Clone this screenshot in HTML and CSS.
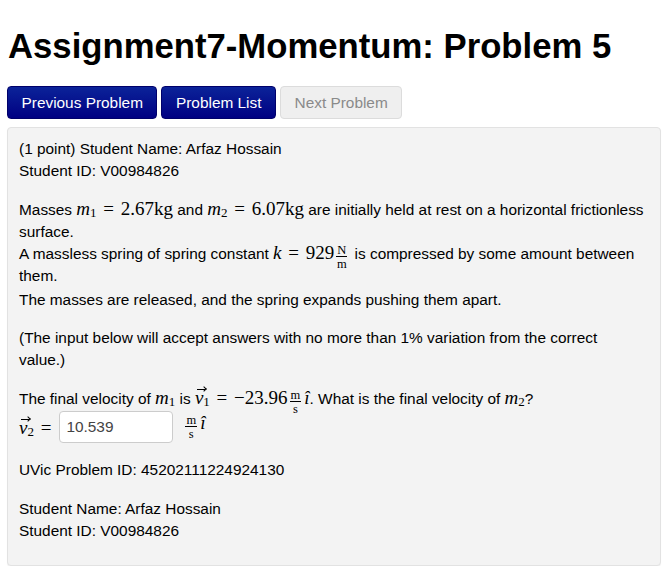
FILE: index.html
```html
<!DOCTYPE html>
<html>
<head>
<meta charset="utf-8">
<link rel="stylesheet" href="styles.css">
</head>
<body>
<div class="page">
  <h1 class="title">Assignment7-Momentum: Problem 5</h1>
  <div class="nav">
    <span class="btn btn-primary">Previous Problem</span>
    <span class="btn btn-primary">Problem List</span>
    <span class="btn btn-disabled">Next Problem</span>
  </div>
  <div class="panel">
    <p>(1 point) Student Name: Arfaz Hossain<br>Student ID: V00984826</p>
    <p class="tight">Masses <span class="m"><i>m</i><sub>1</sub> <span class="op">=</span> 2.67kg</span> and <span class="m"><i>m</i><sub>2</sub> <span class="op">=</span> 6.07kg</span> are initially held at rest on a horizontal frictionless surface.<br>
    A massless spring of spring constant <span class="m"><i>k</i> <span class="op">=</span> 929<span class="frac"><span class="num">N</span><span class="den">m</span></span></span> is compressed by some amount between them.<br>
    <span class="gapline">The masses are released, and the spring expands pushing them apart.</span></p>
    <p>(The input below will accept answers with no more than 1% variation from the correct value.)</p>
    <p class="tight">The final velocity of <span class="m"><i>m</i><sub>1</sub></span> is <span class="m"><span class="vec"><i>v</i></span><sub>1</sub> <span class="op">=</span> &minus;23.96<span class="frac"><span class="num">m</span><span class="den">s</span></span><i>î</i></span>. What is the final velocity of <span class="m"><i>m</i><sub>2</sub></span>?<br>
    <span class="answer"><span class="m"><span class="vec"><i>v</i></span><sub>2</sub> <span class="op">=</span></span><span class="input">10.539</span><span class="m"><span class="frac"><span class="num">m</span><span class="den">s</span></span><i>î</i></span></span></p>
    <p>UVic Problem ID: 45202111224924130</p>
    <p>Student Name: Arfaz Hossain<br>Student ID: V00984826</p>
  </div>
</div>
</body>
</html>
```

FILE: styles.css
```css
html, body {
  margin: 0;
  padding: 0;
  background: #ffffff;
}
body {
  font-family: "Liberation Sans", Arial, Helvetica, sans-serif;
  color: #000;
}
.page {
  padding: 0 7px 0 7px;
}
.title {
  font-size: 34.7px;
  font-weight: bold;
  line-height: 40px;
  margin: 26px 0 20px 1px;
  letter-spacing: 0;
}
.nav {
  display: flex;
  gap: 4px;
  margin-bottom: 8px;
}
.btn {
  display: inline-block;
  font-size: 15.4px;
  line-height: 20px;
  padding: 6px 13.5px 5px 13.5px;
  border-radius: 4px;
  border: 1px solid transparent;
}
.btn-primary {
  color: #fff;
  background: linear-gradient(#0b2399, #000082);
  border-color: #00006a;
}
.btn-disabled {
  color: #8a8a8a;
  background: #efefef;
  border-color: #dcdcdc;
}
.panel {
  width: 627px;
  background: #f3f3f3;
  border: 1px solid #e2e2e2;
  border-radius: 4px;
  box-shadow: 0 1px 1px rgba(0,0,0,0.06);
  padding: 10px 14px 23px 11px;
  font-size: 15.4px;
  line-height: 22px;
}
.panel p {
  margin: 0 0 17px 0;
}
.panel p.tight {
  margin-bottom: 16px;
}
.panel p:last-child {
  margin-bottom: 0;
}
.gapline {
  display: inline-block;
  margin-top: 2px;
}
.m {
  font-family: "Liberation Serif", "Times New Roman", serif;
  font-size: 19px;
  line-height: 0;
  white-space: nowrap;
}
.m i {
  font-style: italic;
}
.m sub {
  font-size: 13px;
  vertical-align: -2px;
  line-height: 0;
}
.op {
  padding: 0 2px;
}
.frac {
  display: inline-flex;
  flex-direction: column;
  align-items: center;
  vertical-align: 5px;
  font-size: 12.5px;
  line-height: 10px;
  margin: -5px 3px -5px 2px;
}
.num {
  border-bottom: 1px solid #000;
  padding: 0 1px 1px;
}
.den {
  padding-top: 2px;
}
.vec {
  position: relative;
  display: inline-block;
  line-height: 1;
}
.vec::after {
  content: "";
  position: absolute;
  left: 2px;
  top: 1px;
  width: 8px;
  height: 1px;
  background: #000;
}
.vec::before {
  content: "";
  position: absolute;
  left: 7px;
  top: -1px;
  width: 3px;
  height: 3px;
  border-top: 1px solid #000;
  border-right: 1px solid #000;
  transform: rotate(45deg);
}
.answer {
  display: inline-flex;
  align-items: center;
  gap: 6px;
  margin-top: 1px;
}
.input {
  display: inline-block;
  width: 100px;
  height: 30px;
  line-height: 30px;
  padding: 0 6px;
  background: #fff;
  border: 1px solid #cccccc;
  border-radius: 4px;
  color: #444;
  font-family: "Liberation Sans", Arial, sans-serif;
  font-size: 15.4px;
  margin-right: 4px;
}
```
